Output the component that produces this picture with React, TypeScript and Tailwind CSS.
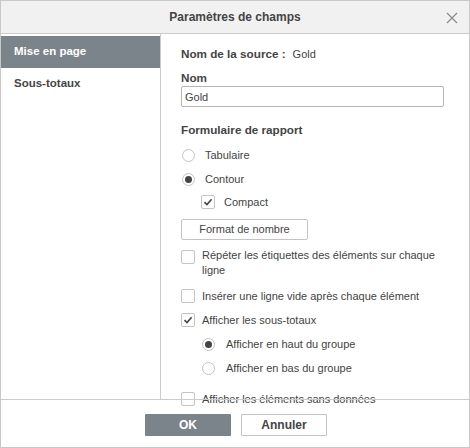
import { useState } from 'react'

function Radio({ checked }: { checked?: boolean }) {
  return (
    <span className="flex h-[13px] w-[13px] shrink-0 items-center justify-center rounded-full border border-[#c4c4c4] bg-white">
      {checked && <span className="h-[7px] w-[7px] rounded-full bg-[#444]" />}
    </span>
  )
}

function Check({ checked }: { checked?: boolean }) {
  return (
    <span className="flex h-[14px] w-[14px] shrink-0 items-center justify-center rounded-[2px] border border-[#c4c4c4] bg-white">
      {checked && (
        <svg width="10" height="10" viewBox="0 0 10 10">
          <path d="M1.5 5.2 L4 7.6 L8.6 2.2" fill="none" stroke="#444" strokeWidth="1.6" />
        </svg>
      )}
    </span>
  )
}

export default function App() {
  const [nom, setNom] = useState('Gold')

  return (
    <div
      className="flex h-[448px] w-[470px] flex-col border border-[#c8c8c8] bg-white text-[11px] text-[#444]"
      style={{ fontFamily: '"Liberation Sans", Arial, sans-serif' }}
    >
      {/* Header */}
      <div className="relative flex h-[33px] shrink-0 items-center justify-center border-b border-[#cbcbcb] bg-[#f1f1f1]">
        <span className="text-[12px] font-bold text-[#444]">Paramètres de champs</span>
        <svg className="absolute right-[11px] top-[11px]" width="12" height="12" viewBox="0 0 12 12">
          <path d="M1 1 L11 11 M11 1 L1 11" stroke="#8a8a8a" strokeWidth="1.2" />
        </svg>
      </div>

      {/* Body */}
      <div className="flex h-[365px] shrink-0">
        <div className="w-[160px] shrink-0 border-r border-[#cbcbcb] pt-[2px] text-[11.5px]">
          <div className="flex h-[32px] items-center bg-[#7c848b] pl-[13px] font-bold text-white">Mise en page</div>
          <div className="flex h-[32px] items-center pl-[13px] font-bold text-[#444]">Sous-totaux</div>
        </div>

        <div className="flex-1 pl-[20px] pr-[20px] pt-[12px]">
          <div className="flex h-[16px] items-center gap-[7px]">
            <span className="text-[11.7px] font-bold">Nom de la source :</span>
            <span>Gold</span>
          </div>
          <div className="mt-2 flex h-[16px] items-center text-[11.7px] font-bold">Nom</div>
          <input
            value={nom}
            onChange={(e) => setNom(e.target.value)}
            className="h-[21px] w-[263px] rounded-[2px] border border-[#b5b5b5] px-[3px] text-[11px] text-[#444] outline-none"
          />
          <div className="mt-[15px] flex h-[16px] items-center text-[11.7px] font-bold">Formulaire de rapport</div>

          <div className="mt-[5px] flex h-[24px] items-center gap-[10px] pl-[1px]">
            <Radio />
            <span>Tabulaire</span>
          </div>
          <div className="flex h-[24px] items-center gap-[10px] pl-[1px]">
            <Radio checked />
            <span>Contour</span>
          </div>
          <div className="flex h-[22px] items-center gap-[9px] pl-[20px]">
            <Check checked />
            <span>Compact</span>
          </div>

          <button
            type="button"
            className="mt-[6px] h-[21px] w-[127px] rounded-[2px] border border-[#c4c4c4] bg-white text-[11px] text-[#444]"
          >
            Format de nombre
          </button>

          <div className="mt-[8px] flex gap-[7px]">
            <span className="mt-[2px]">
              <Check />
            </span>
            <span className="leading-[15px]">Répéter les étiquettes des éléments sur chaque ligne</span>
          </div>
          <div className="mt-[6px] flex h-[24px] items-center gap-[7px]">
            <Check />
            <span>Insérer une ligne vide après chaque élément</span>
          </div>
          <div className="flex h-[24px] items-center gap-[7px]">
            <Check checked />
            <span>Afficher les sous-totaux</span>
          </div>
          <div className="flex h-[24px] items-center gap-[11px] pl-[21px]">
            <Radio checked />
            <span>Afficher en haut du groupe</span>
          </div>
          <div className="flex h-[24px] items-center gap-[11px] pl-[21px]">
            <Radio />
            <span>Afficher en bas du groupe</span>
          </div>
          <div className="mt-[7px] flex h-[24px] items-center gap-[7px]">
            <Check />
            <span>Afficher les éléments sans données</span>
          </div>
        </div>
      </div>

      {/* Footer */}
      <div className="relative flex flex-1 justify-center gap-[10px] border-t border-[#cbcbcb] pt-[14px] pl-[2px]">
        <button type="button" className="h-[22px] w-[86px] rounded-[1px] bg-[#7c848b] text-[12px] font-bold text-white">
          OK
        </button>
        <button
          type="button"
          className="h-[22px] w-[86px] rounded-[1px] border border-[#c4c4c4] bg-white text-[12px] font-bold text-[#444]"
        >
          Annuler
        </button>
      </div>
    </div>
  )
}
